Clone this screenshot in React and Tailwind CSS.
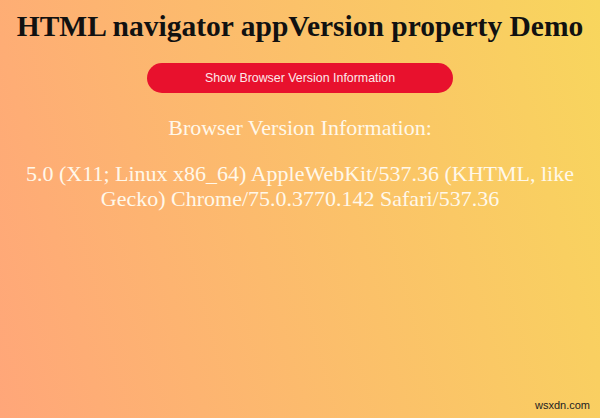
export default function App() {
  return (
    <div className="relative w-[600px] h-[418px] overflow-hidden bg-[linear-gradient(75deg,#ffa679,#f8d65d)] text-center font-['Liberation_Serif',serif]">
      <h1 className="pt-[9px] text-[29.5px] leading-[34px] font-bold text-[#111]">
        HTML navigator appVersion property Demo
      </h1>
      <div className="mt-[20px] flex justify-center">
        <button className="w-[306px] h-[30px] rounded-full bg-[#e8112d] font-['Liberation_Sans',sans-serif] text-[12.4px] text-[#fde8ea]">
          Show Browser Version Information
        </button>
      </div>
      <p className="mt-[22px] text-[22px] leading-[26px] text-[#fff8ea]">
        Browser Version Information:
      </p>
      <p className="mt-[20px] px-[8px] text-[22px] leading-[25px] text-[#fff8ea]">
        5.0 (X11; Linux x86_64) AppleWebKit/537.36 (KHTML, like Gecko) Chrome/75.0.3770.142 Safari/537.36
      </p>
      <div className="absolute right-[10px] bottom-[5px] font-['Liberation_Sans',sans-serif] text-[11px] text-[#222]">
        wsxdn.com
      </div>
    </div>
  );
}
